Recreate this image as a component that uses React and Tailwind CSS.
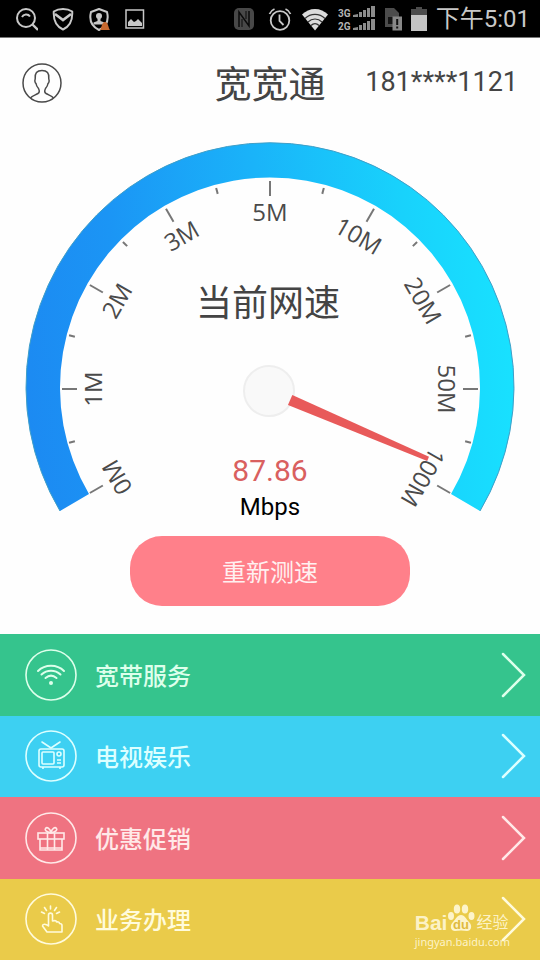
import React from "react";

const CX = 270;
const CY = 389;

const LABELS = ["0M", "1M", "2M", "3M", "5M", "10M", "20M", "50M", "100M"];

const LATIN = "font-[Roboto,'Noto_Sans_CJK_SC',sans-serif]";

function StatusBar() {
  return (
    <div className="flex h-[38px] items-center justify-between border-b border-[#777] bg-black pr-[10px] pl-4">
      <div className="flex items-center gap-[14px] text-[#c8c8c8]">
        <svg width="22" height="24" viewBox="0 0 22 24" fill="none" stroke="currentColor" strokeWidth="2">
          <circle cx="10" cy="11" r="9" />
          <path d="M16.5 17.5 22 23" strokeWidth="2.4" />
          <path d="M6 10c1.5-3 6-3.5 8-.5" />
        </svg>
        <svg width="22" height="24" viewBox="0 0 22 24" fill="none" stroke="currentColor" strokeWidth="2">
          <path d="M11 2C7.5 2 4 3 1.8 4.5c-.5 8 2.7 15 9.2 18 6.5-3 9.7-10 9.2-18C18 3 14.500 2 11 2Z" />
          <path d="m3 7 8 6 8-6" strokeWidth="2.600" />
        </svg>
        <svg width="22" height="24" viewBox="0 0 22 24" fill="none" stroke="currentColor" strokeWidth="2">
          <path d="M11 2 3 5c-2 8 0 14 8 18 8-4 10-10 8-18Z" strokeLinejoin="round" />
          <circle cx="11" cy="9" r="3" fill="currentColor" stroke="none" />
          <path d="M9.5 10h3v4l4 1.5v2h-11v-2l4-1.5z" fill="currentColor" stroke="none" />
          <path d="M12 23c1.500-1 1.500-8 5-8s3.500 7 5 8z" fill="#c8692f" stroke="none" />
        </svg>
        <svg width="22" height="24" viewBox="0 0 22 24" fill="none" stroke="currentColor" strokeWidth="1.500">
          <path d="M2 3h17.500v18H2z" />
          <path d="M4 19v-4l3-3 3 3 2-1 2-2 4 4v3z" fill="currentColor" stroke="none" />
        </svg>
      </div>

      <div className="flex items-center gap-[9px] text-[#c8c8c8]">
        <svg className="mr-1" width="22" height="24" viewBox="0 0 22 24" fill="none">
          <rect x="1" y="1" width="20" height="22" rx="5" fill="#484848" />
          <path d="M6 20V5l10 14V4" stroke="#0a0a0a" strokeWidth="1.5" />
          <path d="M9 20v-8M13 4v8" stroke="#0a0a0a" />
        </svg>
        <svg width="24" height="24" viewBox="0 0 24 24" fill="none" stroke="currentColor" strokeWidth="1.8">
          <circle cx="12" cy="13.5" r="9.300" />
          <path d="M11.5 7.500v6.500l4 4M1.500 7c.8-2 2.500-4 5-5M22.500 7c-.8-2-2.500-4-5-5" />
        </svg>
        <svg width="28" height="24" viewBox="0 0 28 24">
          <path d="M1 7.500C8 0 20 0 27 7.500L14 23.500Z" fill="#dcdcdc" />
          <path d="M4 11.500c5.500-5.500 14.500-5.500 20 0M7 15c4-4 10-4 14 0M10 18.500c2.500-2.500 5.500-2.500 8 0" fill="none" stroke="#333" strokeWidth="1.200" />
        </svg>
        <svg width="37" height="26" viewBox="0 0 37 26">
          <g fill="#b4b4b4" className="font-[Roboto,sans-serif] text-[10px] font-bold">
            <text x="0" y="11">3G</text>
            <text x="0" y="24">2G</text>
          </g>
          <g fill="#8c8c8c">
            {[11, 24].map((y) => (
              <g key={y}>
                <path d={`M15 ${y}v-2l5-1v3z`} />
                <rect x="21" y={y - 5} width="3" height="5" />
                <rect x="25" y={y - 7} width="3" height="7" />
                <rect x="29" y={y - 9} width="3" height="9" />
                <rect x="33" y={y - 11} width="4" height="11" />
              </g>
            ))}
          </g>
        </svg>
        <svg width="18" height="24" viewBox="0 0 18 24">
          <path d="M1 1h9l5 5v14H1z" fill="#4c4c4c" />
          <path d="M4 10h5v7H4z" fill="#151515" />
          <rect x="8.5" y="9.5" width="9.500" height="14" fill="#888" />
          <path d="M13.2 12v6m0 1.500v2" stroke="#111" strokeWidth="2" />
        </svg>
        <svg width="16" height="24" viewBox="0 0 16 24">
          <path d="M5 0h6v2h5v7H0V2h5z" fill="#4c4c4c" />
          <path d="M0 8h16v16H0z" fill="#c4c4c4" />
        </svg>
        <time className={`text-2xl leading-none whitespace-nowrap ${LATIN}`}>下午5:01</time>
      </div>
    </div>
  );
}

function Header() {
  return (
    <header className="grid h-[93px] grid-cols-[1fr_auto_1fr] items-center px-[22px] pb-1 text-[#444]">
      <button type="button" aria-label="个人中心" className="justify-self-start">
        <svg width="40" height="40" viewBox="0 0 40 40" fill="none" stroke="#4a4a4a" strokeWidth="1.5">
          <circle cx="20" cy="20" r="19" />
          <path d="M8.500 35c1.500-2 5-3 7.500-4.500 1.500-1 1.500-3 .5-5-1.500-1.500-2.200-3-2.500-5-1-.5-1.500-3-.8-4.500-.7-6 1.800-8.500 6.800-8.500s7.500 2.500 6.800 8.500c.7 1.500.2 4-.8 4.500-.3 2-1 3.500-2.500 5-1 2-1 4 .5 5 2.500 1.500 6 2.500 7.500 4.500" />
        </svg>
      </button>
      <h1 className="text-[37px] leading-none font-normal">宽宽通</h1>
      <span className={`justify-self-end text-[27px] leading-none ${LATIN}`}>181****1121</span>
    </header>
  );
}

function Gauge() {
  return (
    <svg className="block w-full" viewBox="0 131 540 393" role="img" aria-label="当前网速 87.86 Mbps">
      <defs>
        <linearGradient id="arc" gradientUnits="userSpaceOnUse" x1="26" y1="410" x2="514" y2="370">
          <stop offset="0" stopColor="#1c8af2" />
          <stop offset="0.2" stopColor="#1b95f5" />
          <stop offset="0.5" stopColor="#1ab3f9" />
          <stop offset="0.8" stopColor="#18d2fc" />
          <stop offset="1" stopColor="#18e1ff" />
        </linearGradient>
      </defs>
      <path
        d="M60 511A244 244 0 1 1 480 511L451 494A210 210 0 1 0 89 494Z"
        fill="url(#arc)"
      />
      <path d="M60 511A244 244 0 1 1 480 511" fill="none" stroke="#3f9fc8" strokeWidth="1" />

      <g stroke="#777" strokeWidth="2">
        {Array.from({ length: 17 }, (_, i) => (
          <line
            key={i}
            x1={CX}
            x2={CX}
            y1={CY - 208}
            y2={CY - (i % 2 ? 202 : 193)}
            transform={`rotate(${-120 + i * 15} ${CX} ${CY})`}
          />
        ))}
      </g>

      <circle cx="269" cy="391" r="25" fill="#f9f9f9" stroke="#eee" strokeWidth="2" />
      <path d="M292 385.5 442 388.5V393L292 396.500Z" fill="#e85a5a" transform="rotate(23.2 269 391)" />

      <g fill="#4a4a4a" textAnchor="middle" className="font-['Open_Sans','Noto_Sans',sans-serif] text-[24px]">
        {LABELS.map((label, i) => (
          <text key={label} x={CX} y={CY - 168} transform={`rotate(${-120 + i * 30} ${CX} ${CY})`}>
            {label}
          </text>
        ))}
      </g>

      <text x="268" y="316" textAnchor="middle" fill="#444" className="text-[36px]">当前网速</text>
      <g textAnchor="middle" className="font-[Roboto,sans-serif]">
        <text x="270" y="481" fill="#d9605f" className="text-[30px]">87.86</text>
        <text x="270" y="515" fill="#000" className="text-[24px]">Mbps</text>
      </g>
    </svg>
  );
}

const WifiIcon = () => (
  <g>
    <path d="M13 22c7-7 19-7 26 0M16.500 25.500c5.500-5 13.500-5 19 0M20.500 29c3.500-3 7.500-3 11 0" strokeWidth="2" strokeLinecap="round" />
    <circle cx="26" cy="34" r="2" fill="currentColor" stroke="none" />
  </g>
);

const TvIcon = () => (
  <g>
    <rect x="14" y="19" width="25" height="18" rx="2" />
    <rect x="17" y="22" width="12" height="12" rx="1" />
    <path d="m17 12 9 6 9-6" strokeLinecap="round" />
    <circle cx="34" cy="24" r="2" />
    <path d="M32 30h4M32 33h4M18 37v2M35 37v2" />
  </g>
);

const GiftIcon = () => (
  <g>
    <rect x="13" y="21" width="26" height="6" />
    <path d="M15 27v11h22V27M22.500 21v17M29.500 21v17M15 36h22" />
    <path d="M26 21c-5-1-6.500-3-5.500-4.500 1.500-2 5 0 5.500 4.500.5-4.500 4-6.500 5.500-4.500 1 1.500-.5 3.500-5.500 4.500Z" />
  </g>
);

const TapIcon = () => (
  <g strokeLinejoin="round" strokeLinecap="round">
    <path d="M23.500 33V22c0-2.500 4-2.500 4 0v6c3-1 4 0 4 1 2-.5 3 .5 3 1.500 1.500 0 2.500.5 2.500 2V39H22l-4.500-6c0-2 3-2.500 6 0Z" />
    <path d="M25.500 13v3M19.500 14.500l2 3M31.500 14.500l-2 3M16.500 19l3 1.500M34.500 19l-3 1.500" />
  </g>
);

const ITEMS = [
  { label: "宽带服务", color: "bg-[#35c48d] text-[#ddffeb]", Icon: WifiIcon },
  { label: "电视娱乐", color: "bg-[#3dd0f2] text-[#dcffff]", Icon: TvIcon },
  { label: "优惠促销", color: "bg-[#ef7381] text-[#ffe9e8]", Icon: GiftIcon },
  { label: "业务办理", color: "bg-[#eacb4a] text-[#fffbdc]", Icon: TapIcon },
];

function Menu() {
  return (
    <nav className="grid flex-1 auto-rows-fr">
      {ITEMS.map(({ label, color, Icon }) => (
        <a key={label} href="#" className={`flex min-h-20 items-center pr-[14px] pl-[25px] ${color}`}>
          <svg width="52" height="52" viewBox="0 0 52 52" fill="none" stroke="currentColor" strokeWidth="1.600">
            <circle cx="26" cy="26" r="25" />
            <Icon />
          </svg>
          <span className="ml-[18px] flex-1 text-2xl leading-none font-medium">{label}</span>
          <svg width="26" height="48" viewBox="0 0 26 48" fill="none" stroke="currentColor" strokeWidth="2.500" strokeLinecap="round">
            <path d="m3 3 21 21L3 45" />
          </svg>
        </a>
      ))}
    </nav>
  );
}

function Watermark() {
  return (
    <div className="pointer-events-none absolute right-[30px] bottom-[10px] text-[#fff8d8]/90">
      <div className="flex h-[34px] items-end">
        <span className="font-['Liberation_Sans',sans-serif] text-[21px] leading-[23px] font-bold">Bai</span>
        <svg width="28" height="32" viewBox="0 0 28 32" fill="currentColor">
          <ellipse cx="4" cy="14" rx="3" ry="4" />
          <ellipse cx="10" cy="7" rx="3.200" ry="4.500" />
          <ellipse cx="18" cy="7" rx="3.200" ry="4.500" />
          <ellipse cx="24.500" cy="14" rx="3" ry="4" />
          <path d="M14 13c-4 0-5 4-8 7-4 4-2 9 2 9 2 0 4-.5 6-.5s4 .5 6 .5c4 0 6-5 2-9-3-3-4-7-8-7Z" />
          <text x="14" y="27" textAnchor="middle" fill="#dfba3e" className="font-['Liberation_Sans',sans-serif] text-[13px] font-bold">du</text>
        </svg>
        <span className="ml-px text-base leading-[26px]">经验</span>
      </div>
      <div className="font-['Noto_Sans',sans-serif] text-[11px] leading-[16px]">jingyan.baidu.com</div>
    </div>
  );
}

export default function App() {
  return (
    <div className="relative flex min-h-screen flex-col bg-[#fefefe] font-['Noto_Sans_CJK_SC',sans-serif]">
      <StatusBar />
      <Header />
      <main className="flex flex-1 flex-col">
        <Gauge />
        <button
          type="button"
          className="mx-auto mt-3 mb-7 h-[70px] w-[280px] rounded-[32px] bg-[#ff808a] text-2xl leading-none text-[#fff0f0]"
        >
          重新测速
        </button>
        <Menu />
      </main>
      <Watermark />
    </div>
  );
}
